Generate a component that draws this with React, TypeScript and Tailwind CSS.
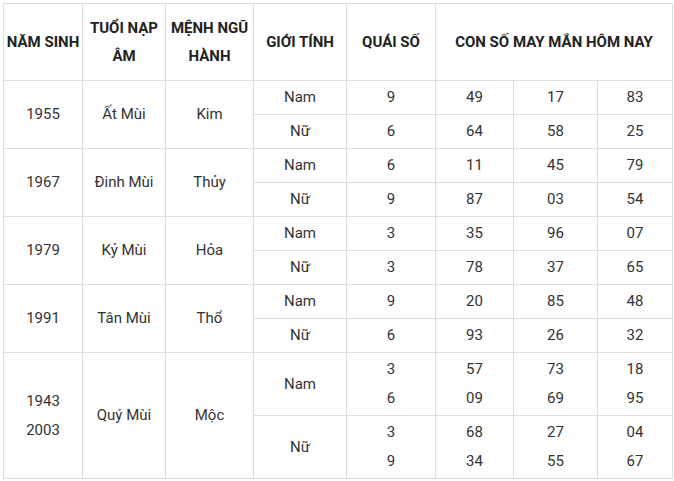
import React from 'react';

type Row = { g: string; q: string[]; n: string[][] };
type Group = { year: string[]; tuoi: string; menh: string; rows: Row[] };

const groups: Group[] = [
  {
    year: ['1955'], tuoi: 'Ất Mùi', menh: 'Kim',
    rows: [
      { g: 'Nam', q: ['9'], n: [['49'], ['17'], ['83']] },
      { g: 'Nữ', q: ['6'], n: [['64'], ['58'], ['25']] },
    ],
  },
  {
    year: ['1967'], tuoi: 'Đinh Mùi', menh: 'Thủy',
    rows: [
      { g: 'Nam', q: ['6'], n: [['11'], ['45'], ['79']] },
      { g: 'Nữ', q: ['9'], n: [['87'], ['03'], ['54']] },
    ],
  },
  {
    year: ['1979'], tuoi: 'Kỷ Mùi', menh: 'Hỏa',
    rows: [
      { g: 'Nam', q: ['3'], n: [['35'], ['96'], ['07']] },
      { g: 'Nữ', q: ['3'], n: [['78'], ['37'], ['65']] },
    ],
  },
  {
    year: ['1991'], tuoi: 'Tân Mùi', menh: 'Thổ',
    rows: [
      { g: 'Nam', q: ['9'], n: [['20'], ['85'], ['48']] },
      { g: 'Nữ', q: ['6'], n: [['93'], ['26'], ['32']] },
    ],
  },
  {
    year: ['1943', '2003'], tuoi: 'Quý Mùi', menh: 'Mộc',
    rows: [
      { g: 'Nam', q: ['3', '6'], n: [['57', '09'], ['73', '69'], ['18', '95']] },
      { g: 'Nữ', q: ['3', '9'], n: [['68', '34'], ['27', '55'], ['04', '67']] },
    ],
  },
];

const Lines = ({ items }: { items: string[] }) => (
  <>
    {items.map((t, i) => (
      <div key={i}>{t}</div>
    ))}
  </>
);

const cell = 'border border-[#dddddd] text-center align-middle p-0';

export default function App() {
  return (
    <div className="bg-white w-[674px] h-[481px] pt-[3px] pl-[3px]" style={{ fontFamily: 'Roboto, "Liberation Sans", sans-serif' }}>
      <table className="table-fixed border-collapse w-[669px] text-[15px] leading-[29px] text-[#333333]">
        <colgroup>
          <col className="w-[79px]" />
          <col className="w-[83px]" />
          <col className="w-[88px]" />
          <col className="w-[93px]" />
          <col className="w-[89px]" />
          <col className="w-[78px]" />
          <col className="w-[84px]" />
          <col className="w-[75px]" />
        </colgroup>
        <thead>
          <tr className="h-[77px] font-bold text-[#222222] leading-[28px]">
            <th className={cell}>NĂM SINH</th>
            <th className={cell}>TUỔI NẠP<br />ÂM</th>
            <th className={cell}>MỆNH NGŨ<br />HÀNH</th>
            <th className={cell}>GIỚI TÍNH</th>
            <th className={cell}>QUÁI SỐ</th>
            <th className={cell} colSpan={3}>CON SỐ MAY MẮN HÔM NAY</th>
          </tr>
        </thead>
        <tbody>
          {groups.map((grp, gi) =>
            grp.rows.map((r, ri) => {
              const tall = r.q.length > 1;
              return (
                <tr key={`${gi}-${ri}`} className={tall ? 'h-[63px]' : 'h-[34px]'}>
                  {ri === 0 && (
                    <>
                      <td className={cell} rowSpan={2}><Lines items={grp.year} /></td>
                      <td className={cell} rowSpan={2}>{grp.tuoi}</td>
                      <td className={cell} rowSpan={2}>{grp.menh}</td>
                    </>
                  )}
                  <td className={cell}>{r.g}</td>
                  <td className={cell}><Lines items={r.q} /></td>
                  {r.n.map((col, ci) => (
                    <td key={ci} className={cell}><Lines items={col} /></td>
                  ))}
                </tr>
              );
            })
          )}
        </tbody>
      </table>
    </div>
  );
}
